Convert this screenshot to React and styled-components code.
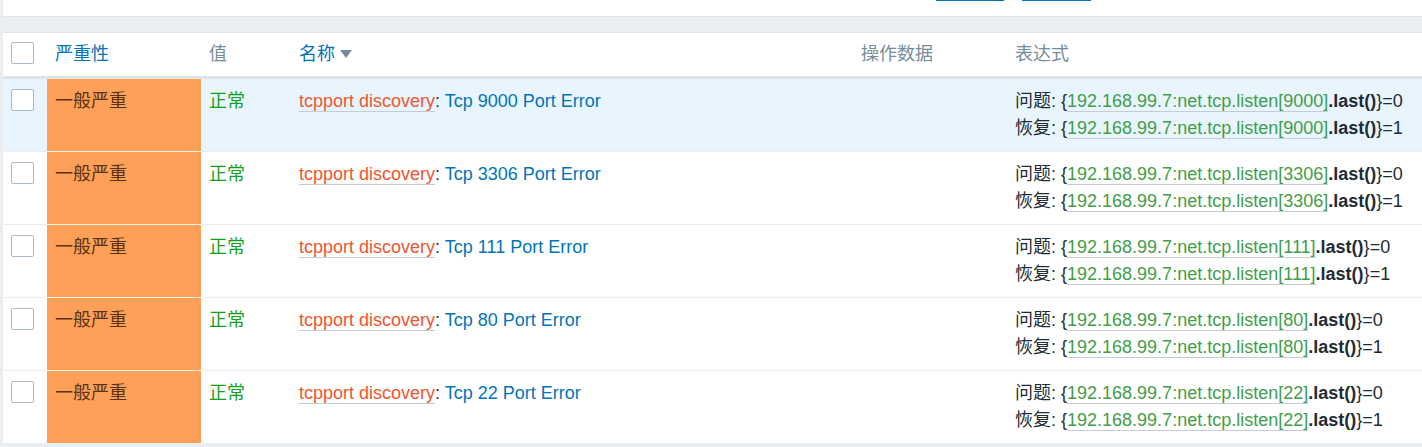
import React from 'react';
import styled, { createGlobalStyle } from 'styled-components';

const GlobalStyle = createGlobalStyle`
  html, body {
    margin: 0;
    padding: 0;
    background: #ebeef0;
    font-family: "Liberation Sans", Arial, "Noto Sans CJK SC", sans-serif;
    font-size: 18px;
    color: #1f2c33;
  }
`;

const Page = styled.div`
  padding-left: 3px;
  width: 1419px;
  overflow: hidden;
`;

const FilterPanel = styled.div`
  height: 16px;
  background: #fff;
  border-bottom: 1px solid #dfe4e7;
  display: flex;
  padding-left: 933px;
  gap: 18px;
`;

const FilterButton = styled.div`
  width: ${(p) => p.w}px;
  height: 1px;
  background: #0275b8;
`;

const Gap = styled.div`
  height: 15px;
  border-bottom: 1px solid #dfe4e7;
`;

const Table = styled.table`
  width: 1419px;
  table-layout: fixed;
  border-collapse: collapse;
  background: #fff;
`;

const HeadCell = styled.th`
  text-align: left;
  font-weight: normal;
  padding: 10px 8px 11px;
  line-height: 22px;
  color: ${(p) => (p.link ? '#0275b8' : '#768d99')};
  border-bottom: 3px solid #dfe4e7;
  vertical-align: top;
  white-space: nowrap;
`;

const HeadCheck = styled(HeadCell)`
  padding-top: 9px;
`;

const Arrow = styled.span`
  display: inline-block;
  width: 0;
  height: 0;
  margin-left: 5px;
  vertical-align: 2px;
  border-left: 6px solid transparent;
  border-right: 6px solid transparent;
  border-top: 8px solid #768d99;
`;

const Row = styled.tr`
  background: ${(p) => (p.hover ? '#e8f5ff' : '#fff')};
`;

const Cell = styled.td`
  padding: 11px 8px 12px;
  line-height: 22px;
  vertical-align: top;
  border-bottom: 1px solid #ebeef0;
  white-space: nowrap;
`;

const CheckCell = styled(Cell)`
  padding-top: 10px;
`;

const SeverityCell = styled(Cell)`
  background: #ffa059;
  color: #5c3212;
  border-bottom-color: #fff2e8;
`;

const Check = styled.span`
  display: block;
  width: 21px;
  height: 20px;
  border: 1px solid #acbbc7;
  border-radius: 2px;
  background: #fff;
`;

const Ok = styled.span`
  color: #13a01b;
`;

const HostLink = styled.span`
  color: #f0552f;
  border-bottom: 1px solid #c4cdd3;
`;

const TriggerName = styled.span`
  color: #0275b8;
`;

const ExprLine = styled.div`
  & + & {
    margin-top: 5px;
  }
`;

const ItemLink = styled.span`
  color: #429e47;
  border-bottom: 1px solid #c4cdd3;
`;

const Fn = styled.b`
  font-weight: bold;
`;

const ports = ['9000', '3306', '111', '80', '22'];

const Expression = ({ label, port, value }) => (
  <ExprLine>
    {label}: {'{'}
    <ItemLink>192.168.99.7:net.tcp.listen[{port}]</ItemLink>
    <Fn>.last()</Fn>
    {'}'}={value}
  </ExprLine>
);

export default function App() {
  return (
    <>
      <GlobalStyle />
      <Page>
        <FilterPanel>
          <FilterButton w={68} />
          <FilterButton w={69} />
        </FilterPanel>
        <Gap />
        <Table>
          <colgroup>
            <col style={{ width: 44 }} />
            <col style={{ width: 154 }} />
            <col style={{ width: 90 }} />
            <col style={{ width: 562 }} />
            <col style={{ width: 154 }} />
            <col />
          </colgroup>
          <thead>
            <tr>
              <HeadCheck>
                <Check />
              </HeadCheck>
              <HeadCell link>严重性</HeadCell>
              <HeadCell>值</HeadCell>
              <HeadCell link>
                名称
                <Arrow />
              </HeadCell>
              <HeadCell>操作数据</HeadCell>
              <HeadCell>表达式</HeadCell>
            </tr>
          </thead>
          <tbody>
            {ports.map((port, i) => (
              <Row key={port} hover={i === 0}>
                <CheckCell>
                  <Check />
                </CheckCell>
                <SeverityCell>一般严重</SeverityCell>
                <Cell>
                  <Ok>正常</Ok>
                </Cell>
                <Cell>
                  <HostLink>tcpport discovery</HostLink>:{' '}
                  <TriggerName>Tcp {port} Port Error</TriggerName>
                </Cell>
                <Cell />
                <Cell>
                  <Expression label="问题" port={port} value="0" />
                  <Expression label="恢复" port={port} value="1" />
                </Cell>
              </Row>
            ))}
          </tbody>
        </Table>
      </Page>
    </>
  );
}
